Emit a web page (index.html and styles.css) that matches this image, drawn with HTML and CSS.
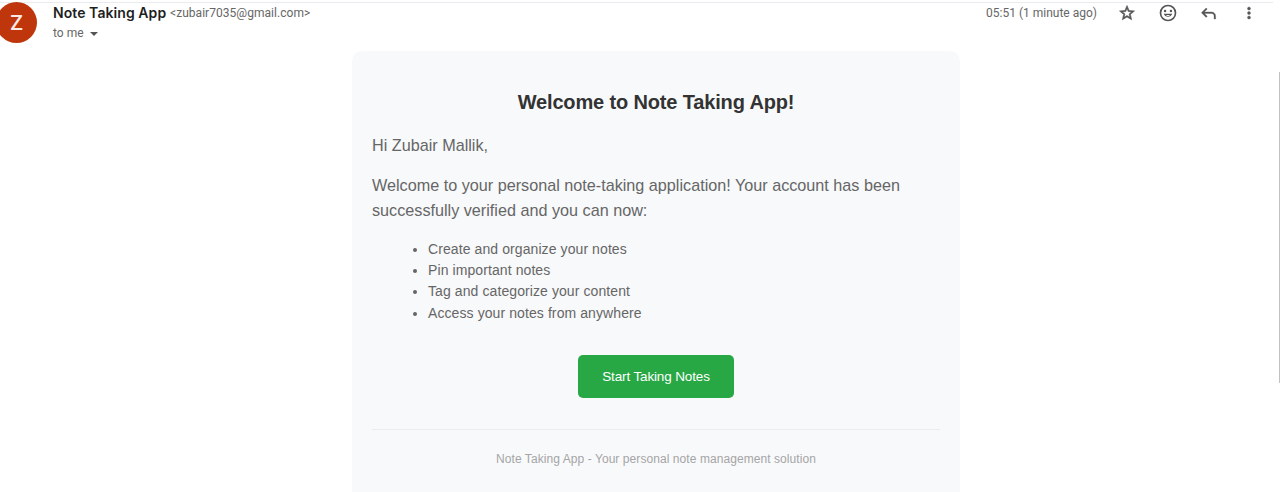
FILE: index.html
```html
<!DOCTYPE html>
<html lang="en">
<head>
<meta charset="utf-8">
<title>Note Taking App</title>
<link rel="stylesheet" href="styles.css">
</head>
<body>
<div class="topline"></div>
<header class="message">
  <div class="avatar">Z</div>
  <div class="sender">
    <div class="from"><span class="name">Note Taking App</span><span class="email">&lt;zubair7035@gmail.com&gt;</span></div>
    <div class="recipient"><span class="to">to me</span><span class="caret"></span></div>
  </div>
  <div class="actions">
    <span class="time">05:51 (1 minute ago)</span>
    <svg class="icon star" viewBox="0 0 24 24"><path d="M22 9.24l-7.19-.62L12 2 9.19 8.63 2 9.24l5.46 4.73L5.82 21 12 17.27 18.18 21l-1.63-7.03L22 9.24zM12 15.4l-3.76 2.27 1-4.28-3.32-2.88 4.38-.38L12 6.1l1.71 4.04 4.38.38-3.32 2.88 1 4.28L12 15.4z"/></svg>
    <svg class="icon smile" viewBox="0 0 24 24"><path d="M12 2a10 10 0 1 0 0 20 10 10 0 0 0 0-20zm0 18a8 8 0 1 1 0-16 8 8 0 0 1 0 16z"/><circle cx="8.5" cy="9.5" r="1.5"/><circle cx="15.5" cy="9.5" r="1.5"/><path d="M6.900 13h10.200a5.500 5.500 0 0 1-10.200 0zm2.600 1.500c1.300 1.500 3.700 1.500 5 0z" fill-rule="evenodd"/></svg>
    <svg class="icon reply" viewBox="0 0 24 24"><path d="M19 19v-4c0-1.660-1.340-3-3-3H6.830l3.580 3.590L9 17l-6-6 6-6 1.410 1.410L6.830 10H16c2.760 0 5 2.240 5 5v4z"/></svg>
    <svg class="icon more" viewBox="0 0 24 24"><circle cx="12" cy="6" r="2"/><circle cx="12" cy="12" r="2"/><circle cx="12" cy="18" r="2"/></svg>
  </div>
</header>
<main class="card">
  <h1 class="title">Welcome to Note Taking App!</h1>
  <p class="text greeting">Hi Zubair Mallik,</p>
  <p class="text">Welcome to your personal note-taking application! Your account has been<br>successfully verified and you can now:</p>
  <ul class="features">
    <li>Create and organize your notes</li>
    <li>Pin important notes</li>
    <li>Tag and categorize your content</li>
    <li>Access your notes from anywhere</li>
  </ul>
  <a class="button">Start Taking Notes</a>
  <footer class="footer">Note Taking App - Your personal note management solution</footer>
</main>
<div class="scrollbar"></div>
</body>
</html>
```
FILE: styles.css
```css
* { box-sizing: border-box; }
body {
  margin: 0;
  height: 492px;
  overflow: hidden;
  position: relative;
  background: #fff;
  font-family: "Liberation Sans", Arial, sans-serif;
}
.topline { width: 1273px; height: 3px; border-bottom: 1px solid #e9ebef; }
.message { display: flex; height: 48px; padding-right: 21px; }
.avatar {
  width: 41px; height: 41px;
  margin: -1px 0 0 -4px;
  border-radius: 50%;
  background: #bf360c;
  color: #fbe9e7;
  font: 500 21px/42px Roboto, sans-serif;
  text-align: center;
}
.sender { margin-left: 16px; }
.from { display: flex; align-items: center; height: 20px; }
.name { font: 600 14px/20px Inter, sans-serif; letter-spacing: .07px; color: #1f1f1f; width: 117px; white-space: nowrap; }
.email { font: 12px/20px Roboto, sans-serif; letter-spacing: .04px; color: #666; white-space: nowrap; }
.recipient { display: flex; align-items: center; gap: 6px; height: 20px; font: 12px/20px Roboto, sans-serif; color: #666; }
.caret { border: 4px solid transparent; border-top-color: #555; border-bottom: 0; margin-top: 1px; }
.actions { display: flex; margin-left: auto; height: 20px; align-items: center; }
.time { font: 12px/20px Roboto, sans-serif; color: #666; margin-right: 21px; }
.icon { width: 20px; height: 20px; fill: #555; }
.star { width: 18px; height: 18px; margin-right: 22px; stroke: #555; stroke-width: .8px; }
.smile { margin-right: 21px; }
.reply { width: 19px; height: 19px; margin-right: 22px; stroke: #555; stroke-width: .4px; }
.more { width: 18px; height: 18px; margin-right: 1px; stroke: #555; stroke-width: .5px; }
.card {
  display: flex;
  flex-direction: column;
  width: 608px;
  height: 460px;
  margin-left: 352px;
  padding: 39px 20px 0;
  border-radius: 10px;
  background: #f8f9fb;
}
.title { margin: 0; text-align: center; font-size: 20px; line-height: 24px; letter-spacing: -.15px; color: #333; }
.text { margin: 15px 0 0; font-size: 16.2px; line-height: 25px; color: #666; white-space: nowrap; }
.greeting { margin-top: 19px; }
.features { margin: 16px 0 0; padding-left: 56px; font-size: 14px; letter-spacing: .09px; line-height: 21.2px; color: #666; }
.button {
  align-self: center;
  width: 156px;
  height: 43px;
  margin-top: 31px;
  border-radius: 5px;
  background: #28a745;
  color: #fff;
  font-size: 13.5px;
  letter-spacing: -.13px;
  line-height: 43px;
  text-align: center;
  white-space: nowrap;
}
.footer { margin-top: 31px; padding-top: 19px; border-top: 1px solid #ececef; font-size: 12px; letter-spacing: .07px; line-height: 20px; color: #a5a5a5; text-align: center; }
.scrollbar { position: absolute; right: 0; top: 72px; width: 1px; height: 311px; background: #c1c1c1; }
```
